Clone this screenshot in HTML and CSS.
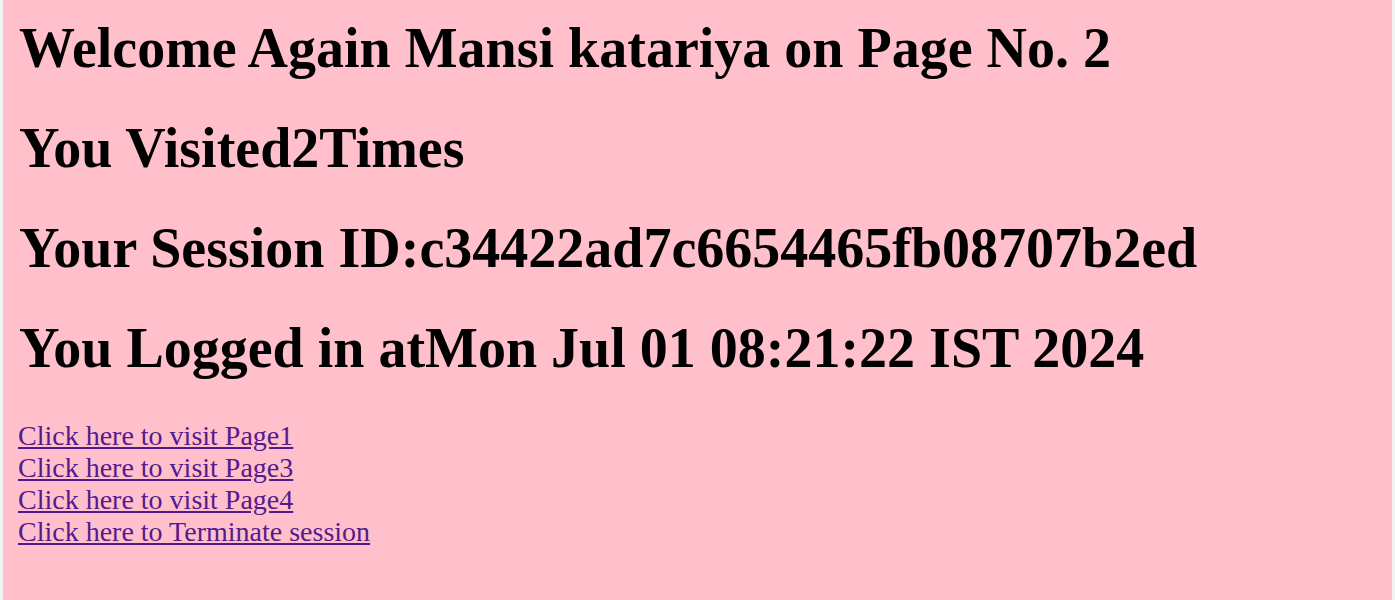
FILE: index.html
```html
<!DOCTYPE html>
<html>
<head>
<meta charset="utf-8">
<link rel="stylesheet" href="styles.css">
</head>
<body>
<div class="page">
<h1>Welcome Again Mansi katariya on Page No. 2</h1>
<h1>You Visited2Times</h1>
<h1>Your Session ID:c34422ad7c6654465fb08707b2ed</h1>
<h1>You Logged in atMon Jul 01 08:21:22 IST 2024</h1>
<div class="links">
<a href="#">Click here to visit Page1</a><br>
<a href="#">Click here to visit Page3</a><br>
<a href="#">Click here to visit Page4</a><br>
<a href="#">Click here to Terminate session</a>
</div>
</div>
</body>
</html>
```
FILE: styles.css
```css
html, body {
  margin: 0;
  padding: 0;
  background: #f3f3f3;
}
.page {
  background: #ffc0cb;
  margin: 0 3px 0 3px;
  padding: 16px 14px 0 15px;
  height: 600px;
  box-sizing: border-box;
  font-family: "Liberation Serif", "Times New Roman", serif;
  font-size: 28px;
  color: #000;
  overflow: hidden;
}
.page h1 {
  font-size: 56px;
  font-weight: bold;
  margin: 0 0 36px 1px;
  line-height: normal;
}
.links {
  padding-top: 3.9px;
}
.links a {
  color: #551a8b;
  text-decoration: underline;
}
```
